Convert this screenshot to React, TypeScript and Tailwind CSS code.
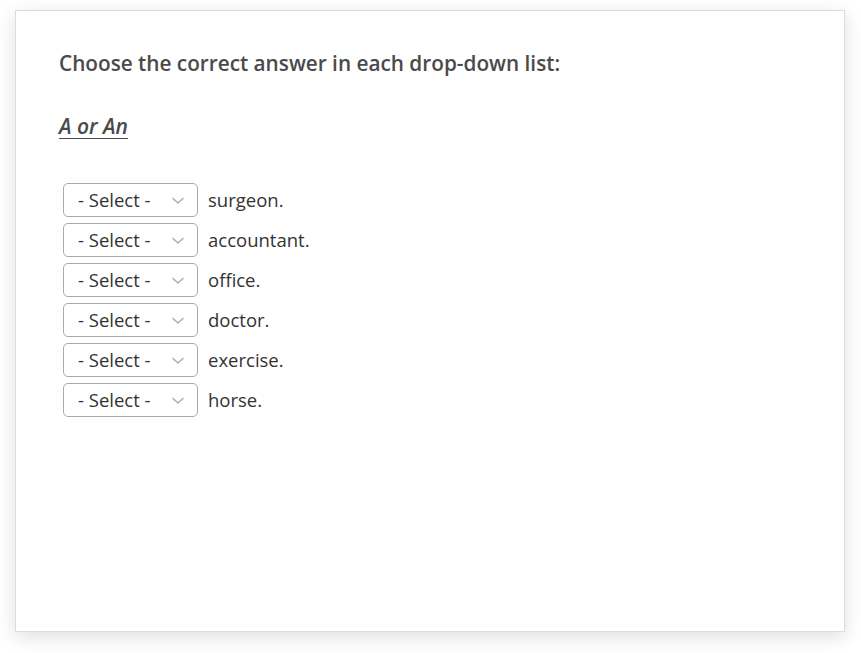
const rows = ["surgeon.", "accountant.", "office.", "doctor.", "exercise.", "horse."];

function SelectBox() {
  return (
    <div className="relative h-[34px] w-[135px]">
      <select
        defaultValue=""
        className="h-full w-full appearance-none rounded-[5px] border border-[#a9a9a9] bg-white pl-[14px] pr-8 text-[18.5px] text-[#333] outline-none"
      >
        <option value="">- Select -</option>
        <option value="a">a</option>
        <option value="an">an</option>
      </select>
      <svg
        className="pointer-events-none absolute right-[13px] top-[13px]"
        width="14"
        height="9"
        viewBox="0 0 14 9"
        fill="none"
      >
        <path d="M1.5 2l5.5 5 5.5-5" stroke="#b0b0b0" strokeWidth="1.6" />
      </svg>
    </div>
  );
}

export default function App() {
  return (
    <div className="min-h-[653px] bg-white px-[15px] pt-[10px] pb-[21px] font-['Open_Sans',sans-serif]">
      <div className="h-[622px] w-[830px] border border-[#dcdcdc] bg-white px-[43px] pt-[37px] shadow-[0_5px_18px_rgba(0,0,0,0.13)]">
        <h1 className="text-[20.75px] font-semibold text-[#4a4a4a]">Choose the correct answer in each drop-down list:</h1>
        <p className="mt-[32px] text-[21px] font-semibold italic text-[#4a4a4a] underline decoration-1 underline-offset-[4px]">
          A or An
        </p>
        <div className="mt-[40px] flex flex-col gap-[6px] pl-[4px]">
          {rows.map((word) => (
            <div key={word} className="flex items-center gap-[10px]">
              <SelectBox />
              <span className="text-[18.5px] text-[#333]">{word}</span>
            </div>
          ))}
        </div>
      </div>
    </div>
  );
}
